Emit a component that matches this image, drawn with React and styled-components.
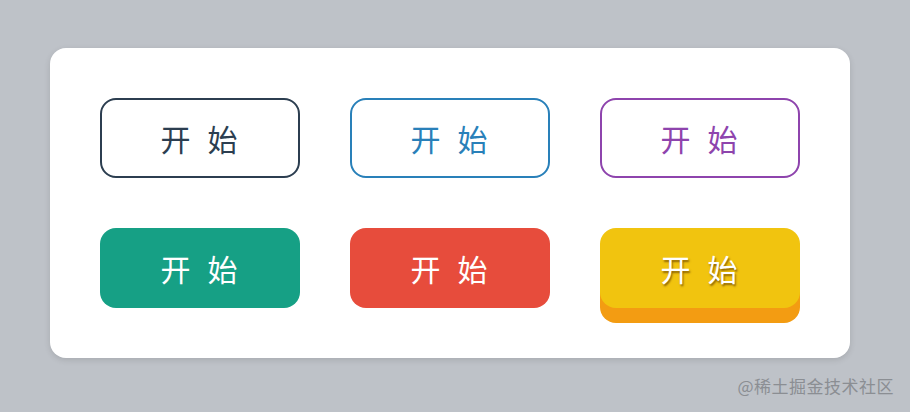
import React from "react";
import styled, { createGlobalStyle, css } from "styled-components";

const Global = createGlobalStyle`
  html, body { margin: 0; padding: 0; }
  body {
    background: #bec2c8;
    font-family: "Noto Sans CJK SC", "Noto Sans", sans-serif;
  }
`;

const Page = styled.div`
  width: 910px;
  height: 412px;
  box-sizing: border-box;
  padding: 48px 60px 0 50px;
  position: relative;
`;

const Card = styled.div`
  width: 800px;
  height: 310px;
  box-sizing: border-box;
  background: #fff;
  border-radius: 16px;
  box-shadow: 0 2px 6px rgba(0, 0, 0, 0.12);
  padding: 50px;
  display: grid;
  grid-template-columns: repeat(3, 200px);
  grid-auto-rows: 80px;
  column-gap: 50px;
  row-gap: 50px;
`;

const palette = {
  dark: "#2c3e50",
  blue: "#2980b9",
  purple: "#8e44ad",
  green: "#16a085",
  red: "#e74c3c",
  yellow: "#f1c40f",
};

const Button = styled.button`
  box-sizing: border-box;
  width: 200px;
  height: 80px;
  border-radius: 16px;
  font-family: "Noto Sans CJK SC", "Noto Sans", sans-serif;
  font-size: 30px;
  letter-spacing: 17px;
  padding: 0 0 0 15px;
  display: flex;
  align-items: center;
  justify-content: center;
  cursor: pointer;
  ${({ $variant, $color }) =>
    $variant === "outline"
      ? css`
          background: #fff;
          border: 2px solid ${palette[$color]};
          color: ${palette[$color]};
        `
      : css`
          background: ${palette[$color]};
          border: none;
          color: #fff;
        `}
  ${({ $raised }) =>
    $raised &&
    css`
      box-shadow: 0 15px 0 #f39c12;
      text-shadow: 1px 2px 2px rgba(110, 70, 0, 0.75);
    `}
`;

const Watermark = styled.div`
  position: absolute;
  right: 16px;
  bottom: 14px;
  font-size: 17px;
  color: #8b8e93;
  letter-spacing: 0.5px;
  font-family: "Noto Sans CJK SC", "Noto Sans", sans-serif;
`;

export default function App() {
  return (
    <>
      <Global />
      <Page>
        <Card>
          <Button $variant="outline" $color="dark">开始</Button>
          <Button $variant="outline" $color="blue">开始</Button>
          <Button $variant="outline" $color="purple">开始</Button>
          <Button $variant="solid" $color="green">开始</Button>
          <Button $variant="solid" $color="red">开始</Button>
          <Button $variant="solid" $color="yellow" $raised>开始</Button>
        </Card>
        <Watermark>@稀土掘金技术社区</Watermark>
      </Page>
    </>
  );
}
